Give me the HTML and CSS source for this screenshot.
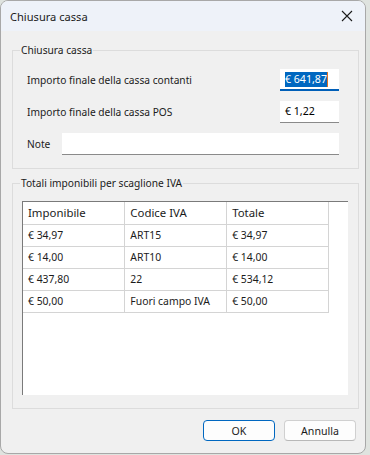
FILE: index.html
```html
<!DOCTYPE html>
<html lang="it">

<head>
    <meta charset="UTF-8">
    <title>Chiusura cassa</title>
    <link rel="stylesheet" href="styles.css">
</head>

<body>
    <div class="window">
        <div class="titlebar">
            <span class="title">Chiusura cassa</span>
            <svg class="close" width="12" height="12" viewBox="0 0 12 12">
                <path d="M1 1 L11 11 M11 1 L1 11" stroke="#1b1b1b" stroke-width="1.1" fill="none" />
            </svg>
        </div>

        <div class="content">
            <fieldset class="group group-cassa">
                <legend>Chiusura cassa</legend>

                <div class="field-row">
                    <label for="contanti">Importo finale della cassa contanti</label>
                    <div class="input input-focus" id="contanti"><span class="selected">€ 641,87</span><span class="caret"></span></div>
                </div>

                <div class="field-row">
                    <label for="pos">Importo finale della cassa POS</label>
                    <div class="input" id="pos">€ 1,22</div>
                </div>

                <div class="field-row note-row">
                    <label for="note">Note</label>
                    <div class="input input-wide" id="note"></div>
                </div>
            </fieldset>

            <fieldset class="group group-iva">
                <legend>Totali imponibili per scaglione IVA</legend>

                <div class="grid-box">
                    <table class="grid">
                        <tr>
                            <th>Imponibile</th>
                            <th>Codice IVA</th>
                            <th>Totale</th>
                        </tr>
                        <tr>
                            <td>€ 34,97</td>
                            <td>ART15</td>
                            <td>€ 34,97</td>
                        </tr>
                        <tr>
                            <td>€ 14,00</td>
                            <td>ART10</td>
                            <td>€ 14,00</td>
                        </tr>
                        <tr>
                            <td>€ 437,80</td>
                            <td>22</td>
                            <td>€ 534,12</td>
                        </tr>
                        <tr>
                            <td>€ 50,00</td>
                            <td>Fuori campo IVA</td>
                            <td>€ 50,00</td>
                        </tr>
                    </table>
                </div>
            </fieldset>

            <div class="button-group">
                <button type="button" class="btn btn-default">OK</button>
                <button type="button" class="btn">Annulla</button>
            </div>
        </div>
    </div>
</body>

</html>
```

FILE: styles.css
```css
* {
    margin: 0;
    padding: 0;
    box-sizing: border-box;
    font-family: 'Noto Sans', 'Open Sans', sans-serif;
}

body {
    background: #dfe3df;
    width: 370px;
    height: 455px;
    overflow: hidden;
}

.window {
    width: 366px;
    height: 454px;
    background: #f0f0f0;
    border: 1px solid #a8a8a8;
    border-radius: 8px;
    overflow: hidden;
    display: flex;
    flex-direction: column;
}

.titlebar {
    height: 30px;
    background: #eef2f9;
    display: flex;
    align-items: center;
    justify-content: space-between;
    padding: 0 12px 0 9px;
}

.title {
    font-size: 11.1px;
    color: #1b1b1b;
}

.close {
    display: block;
}

.content {
    flex: 1;
    padding: 12px 6px 0 11px;
    display: flex;
    flex-direction: column;
}

.group {
    border: 1px solid #dcdcdc;
    width: 347px;
}

.group legend {
    font-size: 10.2px;
    color: #1b1b1b;
    padding: 0 1px;
}

.group-cassa {
    height: 126px;
    padding: 12px 19px 0 14px;
}

.group-cassa legend {
    margin-left: -7px;
}

.field-row {
    display: flex;
    align-items: center;
    justify-content: space-between;
    height: 22px;
    margin-bottom: 10px;
}

.field-row label {
    font-size: 10.2px;
    color: #1b1b1b;
}

.input {
    width: 59px;
    height: 22px;
    background: #fff;
    border-bottom: 1px solid #8a8a8a;
    font-size: 10.6px;
    color: #000;
    padding: 3px 0 0 5px;
    display: flex;
    align-items: flex-start;
}

.input-focus {
    border-bottom: 2px solid #005fb8;
}

.selected {
    background: #0067c0;
    color: #fff;
    padding: 0 0 1px;
}

.caret {
    width: 1px;
    height: 15px;
    background: #e07020;
}

.note-row label {
    width: 35px;
}

.input-wide {
    flex: 1;
}

.group-iva {
    margin-top: 7px;
    padding: 11px 10px 13px 9px;
}

.group-iva legend {
    margin-left: -2px;
}

.grid-box {
    background: #fff;
    border-top: 1px solid #7a7a7a;
    border-left: 1px solid #7a7a7a;
    height: 194px;
}

.grid {
    border-collapse: collapse;
    width: 306px;
    table-layout: fixed;
}

.grid th,
.grid td {
    border: 1px solid #d4d4d4;
    border-top: none;
    border-left: none;
    height: 22px;
    padding: 0 5px;
    text-align: left;
    font-weight: normal;
    white-space: nowrap;
    color: #1b1b1b;
}

.grid th {
    font-size: 11.4px;
}

.grid td {
    font-size: 10.4px;
}

.button-group {
    display: flex;
    justify-content: flex-end;
    gap: 9px;
    margin-top: 11px;
    padding-right: 3px;
}

.btn {
    width: 72px;
    height: 21px;
    background: #fdfdfd;
    border: 1px solid #d0d0d0;
    border-bottom-color: #b8b8b8;
    border-radius: 4px;
    font-size: 10.6px;
    color: #1b1b1b;
    cursor: pointer;
}

.btn-default {
    border: 1px solid #0067c0;
}
```
